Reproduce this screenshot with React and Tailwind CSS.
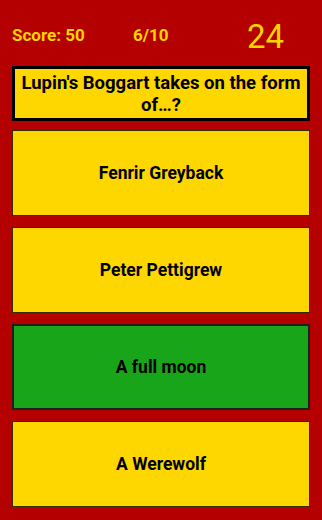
import React from "react";

const answers = [
  { text: "Fenrir Greyback", correct: false },
  { text: "Peter Pettigrew", correct: false },
  { text: "A full moon", correct: true },
  { text: "A Werewolf", correct: false },
];

const App = () => {
  return (
    <div
      className="w-[322px] h-[520px] bg-[#b50000] px-3 flex flex-col"
      style={{ fontFamily: "Roboto, 'Liberation Sans', sans-serif" }}
    >
      <div className="flex items-center h-[66px] pt-[6px] text-[#ffd400]">
        <div className="w-[121px] text-[17px] font-bold">Score: 50</div>
        <div className="w-[114px] text-[17px] font-bold">6/10</div>
        <div className="text-[33px] leading-none">24</div>
      </div>
      <div className="h-[55px] border-[3px] border-black bg-[#ffd700] flex items-center justify-center text-center text-[18.5px] font-bold leading-[22px] text-black">
        Lupin's Boggart takes on the form of…?
      </div>
      <div className="flex flex-col gap-[11px] mt-[9px]">
        {answers.map((a) => (
          <button
            key={a.text}
            className={
              a.correct
                ? "h-[86px] w-full border-2 border-[#1f1f1f] bg-[#19a519] text-[17.5px] font-bold text-black"
                : "h-[86px] w-full border border-[#3a2a00] bg-[#ffd700] text-[17.5px] font-bold text-black"
            }
          >
            {a.text}
          </button>
        ))}
      </div>
    </div>
  );
};

export default App;
